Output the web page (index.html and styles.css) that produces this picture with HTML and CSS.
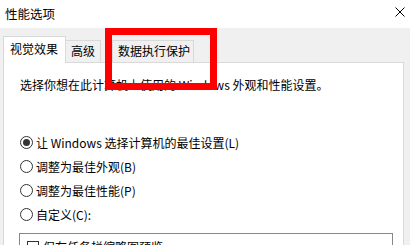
FILE: index.html
```html
<!DOCTYPE html>
<html>
<head>
  <meta charset="utf-8">
  <title>性能选项</title>
  <link rel="stylesheet" href="styles.css">
</head>
<body>
  <div class="dialog">
    <div class="titlebar">
      <span class="title">性能选项</span>
      <svg class="close" width="10" height="10" viewBox="0 0 10 10">
        <path d="M0.5 0.5 L9.5 9.5 M9.5 0.5 L0.5 9.5" stroke="#000" stroke-width="1" fill="none"/>
      </svg>
    </div>

    <div class="tabs">
      <div class="tab active">视觉效果</div>
      <div class="tab">高级</div>
      <div class="tab dep">数据执行保护</div>
    </div>

    <div class="panel">
      <p class="intro">选择你想在此计算机上使用的 Windows 外观和性能设置。</p>

      <div class="options">
        <div class="option"><span class="radio checked"></span>让 Windows 选择计算机的最佳设置(L)</div>
        <div class="option"><span class="radio"></span>调整为最佳外观(B)</div>
        <div class="option"><span class="radio"></span>调整为最佳性能(P)</div>
        <div class="option"><span class="radio"></span>自定义(C):</div>
      </div>

      <div class="listbox">
        <div class="item"><span class="check"></span>保存任务栏缩略图预览</div>
      </div>
    </div>

    <!-- highlight box drawn over the tab -->
    <div class="mark"></div>
  </div>
</body>
</html>
```

FILE: styles.css
```css
body {
  margin: 0;
  padding: 0;
  font-family: "Noto Sans CJK SC", "Microsoft YaHei", sans-serif;
  font-size: 12px;
  color: #000;
  background-color: #fff;
}

.dialog {
  position: relative;
  width: 410px;
  height: 245px;
  overflow: hidden;
  background-color: #f0f0f0;
}

.titlebar {
  display: flex;
  align-items: center;
  justify-content: space-between;
  height: 28px;
  padding: 0 5px 0 5px;
  background-color: #fff;
}

.title {
  font-size: 12.5px;
  line-height: 16px;
  margin-top: -1px;
}

.close {
  margin-top: -4px;
}

.tabs {
  display: flex;
  align-items: flex-end;
  height: 34px;
  padding-left: 3px;
}

.tab {
  height: 21px;
  line-height: 20px;
  padding: 0 5px;
  border: 1px solid #d9d9d9;
  border-bottom: none;
  background-color: #f0f0f0;
}

.tab.active {
  position: relative;
  z-index: 1;
  height: 26px;
  line-height: 24px;
  padding: 0 7px 0 6px;
  margin-bottom: -1px;
  background-color: #fff;
}

.tab + .tab {
  border-left: none;
}

.tab.dep {
  margin-left: 11px;
  border-left: 1px solid #d9d9d9;
  padding: 0 3px 0 5px;
}

.panel {
  height: 200px;
  margin: 0 6px 0 3px;
  border: 1px solid #d9d9d9;
  background-color: #fff;
  padding: 0 10px 0 16px;
}

.intro {
  margin: 14px 0 0 0;
  line-height: 16px;
  white-space: nowrap;
}

.options {
  margin-top: 37px;
}

.option {
  display: flex;
  align-items: center;
  height: 24px;
  white-space: nowrap;
}

.radio {
  width: 11px;
  height: 11px;
  border: 1px solid #333;
  border-radius: 50%;
  margin-right: 3px;
  display: flex;
  align-items: center;
  justify-content: center;
}

.radio.checked::after {
  content: "";
  width: 7px;
  height: 7px;
  border-radius: 50%;
  background-color: #333;
}

.listbox {
  margin: 7px 0 0 -1px;
  height: 40px;
  border: 1px solid #828790;
  padding: 4px 0 0 7px;
}

.item {
  display: flex;
  align-items: center;
  white-space: nowrap;
}

.check {
  width: 10px;
  height: 10px;
  border: 1px solid #333;
  margin-right: 4px;
}

.mark {
  position: absolute;
  left: 105px;
  top: 28px;
  width: 112px;
  height: 62px;
  box-sizing: border-box;
  border: 7px solid #f00;
}
```
